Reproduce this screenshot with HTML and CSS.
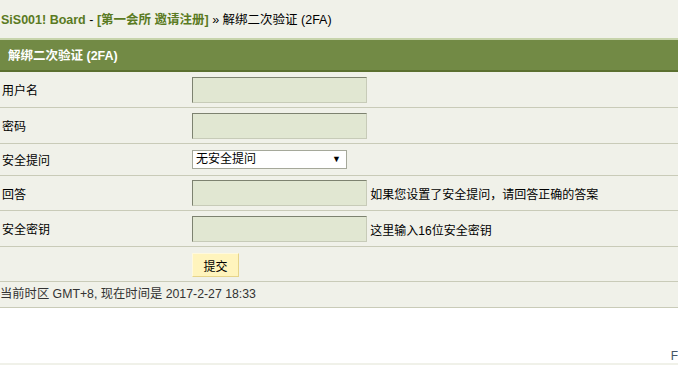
FILE: index.html
```html
<!DOCTYPE html>
<html>
<head>
  <meta charset="utf-8">
  <title>解绑二次验证 (2FA)</title>
  <link rel="stylesheet" href="styles.css">
</head>
<body>

  <div class="nav">
    <a class="bold" href="#">SiS001! Board</a> - <a class="bold" href="#">[第一会所 邀请注册]</a> &raquo; 解绑二次验证 (2FA)
  </div>

  <form class="mainbox">
    <h3 class="title">解绑二次验证 (2FA)</h3>
    <table class="formtable">
      <tr>
        <th>用户名</th>
        <td><input type="text" class="txt"></td>
      </tr>
      <tr>
        <th>密码</th>
        <td><input type="password" class="txt"></td>
      </tr>
      <tr class="short">
        <th>安全提问</th>
        <td>
          <div class="select">无安全提问<span class="arrow">&#9660;</span></div>
        </td>
      </tr>
      <tr class="mid">
        <th>回答</th>
        <td><input type="text" class="txt"> <span class="tip">如果您设置了安全提问，请回答正确的答案</span></td>
      </tr>
      <tr>
        <th>安全密钥</th>
        <td><input type="text" class="txt"> <span class="tip">这里输入16位安全密钥</span></td>
      </tr>
      <tr class="mid">
        <th></th>
        <td><button type="button" class="btn">提交</button></td>
      </tr>
    </table>
  </form>

  <div class="footer">当前时区 GMT+8, 现在时间是 2017-2-27 18:33</div>

  <div class="blank">
    <span class="powered">F</span>
  </div>

</body>
</html>
```

FILE: styles.css
```css
/* Общие */
body {
  margin: 0;
  background: #fff;
  font: 12px Tahoma, "Liberation Sans", "Noto Sans CJK SC", sans-serif;
  color: #000;
}

a {
  text-decoration: none;
  color: #5a7a22;
}

.bold {
  font-weight: bold;
}

/* Навигация */
.nav {
  height: 38px;
  line-height: 40px;
  padding-left: 1px;
  background: #f0f1e9;
  border-bottom: 2px solid #c7d4ab;
  color: #000;
  font-size: 12.5px;
}

/* Форма */
.mainbox {
  margin: 0;
  background: #f0f1e9;
}

.title {
  margin: 0;
  height: 30px;
  line-height: 32px;
  padding-left: 8px;
  background: #728a45;
  border-bottom: 2px solid #5b7030;
  color: #fff;
  font-size: 12.5px;
  font-weight: bold;
}

.formtable {
  width: 100%;
  border-collapse: collapse;
}

.formtable th,
.formtable td {
  height: 35px;
  padding: 0;
  border-bottom: 1px solid #c9cbb8;
  text-align: left;
  font-weight: normal;
  vertical-align: middle;
}

.formtable .short th,
.formtable .short td {
  height: 31px;
}

.formtable .mid th,
.formtable .mid td {
  height: 34px;
}

.formtable th {
  width: 190px;
  padding-left: 2px;
}

.txt {
  width: 171px;
  height: 22px;
  margin: 0;
  padding: 1px;
  background: #e1e7d2;
  border: 1px solid;
  border-color: #7d8270 #c7cbb8 #c7cbb8 #7d8270;
  vertical-align: middle;
}

.tip {
  vertical-align: middle;
}

.select {
  position: relative;
  width: 150px;
  height: 17px;
  line-height: 17px;
  padding-left: 3px;
  background: #fff;
  border: 1px solid #a5a89a;
  font-size: 12px;
}

.arrow {
  position: absolute;
  right: 5px;
  top: 0;
  font-size: 9px;
}

.btn {
  width: 47px;
  height: 24px;
  margin-top: 2px;
  padding: 0;
  background: #fff4bd;
  border: 1px solid;
  border-color: #fff9de #e6d48a #e6d48a #fff9de;
  font: 12px "Noto Sans CJK SC", sans-serif;
  color: #000;
}

/* Подвал */
.footer {
  height: 25px;
  line-height: 24px;
  background: #f0f1e9;
  border-bottom: 1px solid #c9cbb8;
  color: #333;
  font-size: 12.3px;
}

.blank {
  position: relative;
  height: 55px;
  border-bottom: 3px solid #f0f1e9;
}

.powered {
  position: absolute;
  right: 0;
  bottom: 0;
  color: #445566;
  font-size: 12px;
}
```
